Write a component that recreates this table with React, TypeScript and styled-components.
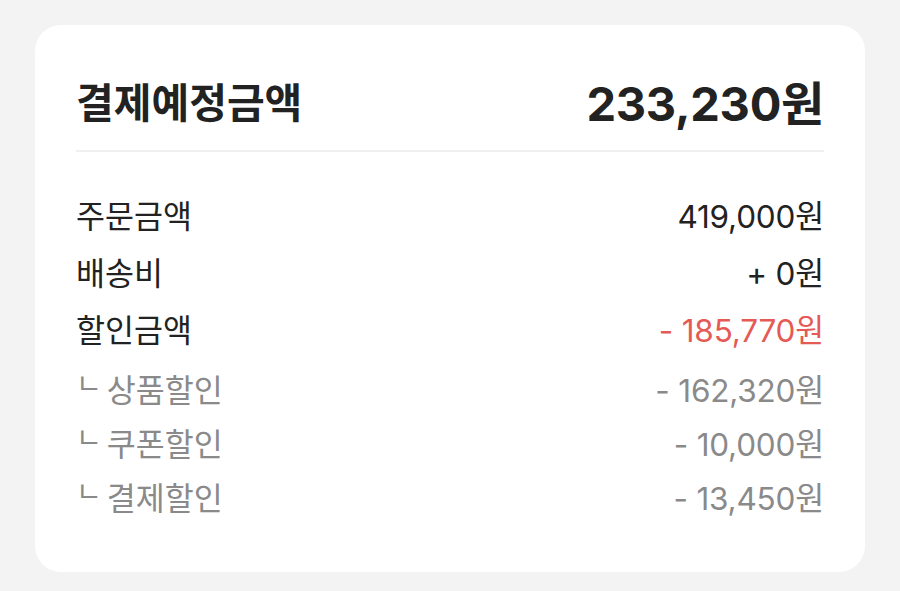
import React from 'react';
import styled, { createGlobalStyle } from 'styled-components';

const GlobalStyle = createGlobalStyle`
  html, body {
    margin: 0;
    padding: 0;
    background: #f3f3f3;
  }
  body {
    font-family: Inter, "Noto Sans CJK KR", "Noto Sans", sans-serif;
    color: #222;
  }
`;

const Page = styled.div`
  width: 900px;
  height: 591px;
  padding: 25px 35px 0;
  box-sizing: border-box;
`;

const Card = styled.section`
  height: 547px;
  background: #fff;
  border-radius: 26px;
  padding: 0 41px;
  box-sizing: border-box;
`;

const Header = styled.div`
  display: flex;
  justify-content: space-between;
  align-items: center;
  height: 50px;
  padding: 50px 0 25px;
  border-bottom: 2px solid #f0f0f0;
`;

const Title = styled.h2`
  margin: 0;
  font-size: 41px;
  font-weight: 700;
  color: #222;
`;

const Total = styled.span`
  font-size: 47px;
  font-weight: 700;
  letter-spacing: -0.3px;
  color: #222;
`;

const List = styled.div`
  display: flex;
  flex-direction: column;
  padding-top: 33px;
`;

const Row = styled.div<{ $sub?: boolean; $tone?: 'red' | 'gray' }>`
  display: flex;
  justify-content: space-between;
  align-items: center;
  height: ${p => (p.$sub ? '54px' : '57px')};
  font-size: 31.5px;
  color: ${p => (p.$tone === 'gray' ? '#8a8a8a' : '#222')};
`;

const SubGroup = styled.div`
  display: flex;
  flex-direction: column;
  margin-top: 5px;
`;

const Label = styled.span`
  display: flex;
  align-items: center;
  gap: 5px;
`;

const Corner = styled.span`
  font-size: 28px;
  color: #8a8a8a;
  transform: translateY(-6px);
`;

const Amount = styled.span<{ $red?: boolean }>`
  color: ${p => (p.$red ? '#e55a55' : 'inherit')};
  letter-spacing: -0.2px;
`;

const subs = [
  { label: '상품할인', value: '- 162,320원' },
  { label: '쿠폰할인', value: '- 10,000원' },
  { label: '결제할인', value: '- 13,450원' },
];

const App: React.FC = () => {
  return (
    <Page>
      <GlobalStyle />
      <Card>
        <Header>
          <Title>결제예정금액</Title>
          <Total>233,230원</Total>
        </Header>
        <List>
          <Row>
            <Label>주문금액</Label>
            <Amount>419,000원</Amount>
          </Row>
          <Row>
            <Label>배송비</Label>
            <Amount>+ 0원</Amount>
          </Row>
          <Row>
            <Label>할인금액</Label>
            <Amount $red>- 185,770원</Amount>
          </Row>
          <SubGroup>
            {subs.map(s => (
              <Row key={s.label} $sub $tone="gray">
                <Label>
                  <Corner>ㄴ</Corner>
                  {s.label}
                </Label>
                <Amount>{s.value}</Amount>
              </Row>
            ))}
          </SubGroup>
        </List>
      </Card>
    </Page>
  );
};

export default App;
